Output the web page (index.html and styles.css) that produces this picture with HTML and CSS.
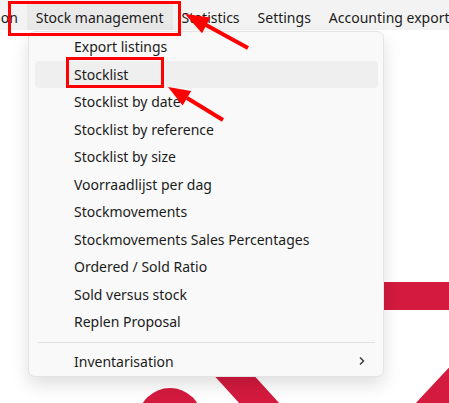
FILE: index.html
```html
<!DOCTYPE html>
<html lang="en">
<head>
  <meta charset="UTF-8">
  <title>Stock management menu</title>
  <link rel="stylesheet" href="styles.css">
</head>
<body>

  <svg class="backdrop" width="449" height="403" viewBox="0 0 449 403">
    <rect x="370" y="282" width="90" height="28" fill="#d41a3e"/>
    <polygon points="200,360 240,360 290,415 250,415" fill="#d41a3e"/>
    <circle cx="170" cy="420" r="32" fill="#d41a3e"/>
    <polygon points="470,345 470,420 400,420" fill="#d41a3e"/>
  </svg>

  <nav class="menubar">
    <span class="menubar-item first">tion</span>
    <span class="menubar-item active">Stock management</span>
    <span class="menubar-item">Statistics</span>
    <span class="menubar-item">Settings</span>
    <span class="menubar-item">Accounting export</span>
  </nav>

  <ul class="dropdown">
    <li class="dropdown-item">Export listings</li>
    <li class="dropdown-item hover">Stocklist</li>
    <li class="dropdown-item">Stocklist by date</li>
    <li class="dropdown-item">Stocklist by reference</li>
    <li class="dropdown-item">Stocklist by size</li>
    <li class="dropdown-item">Voorraadlijst per dag</li>
    <li class="dropdown-item">Stockmovements</li>
    <li class="dropdown-item">Stockmovements Sales Percentages</li>
    <li class="dropdown-item">Ordered / Sold Ratio</li>
    <li class="dropdown-item">Sold versus stock</li>
    <li class="dropdown-item">Replen Proposal</li>
    <li class="dropdown-sep"></li>
    <li class="dropdown-item has-sub">
      <span>Inventarisation</span>
      <svg class="chevron" width="8" height="10" viewBox="0 0 8 10">
        <path d="M2 1.5 L5.5 5 L2 8.5" fill="none" stroke="#333" stroke-width="1.4"/>
      </svg>
    </li>
  </ul>

  <!-- annotations -->
  <div class="mark mark-menu"></div>
  <div class="mark mark-item"></div>
  <svg class="arrows" width="449" height="403" viewBox="0 0 449 403">
    <line x1="248" y1="48" x2="206" y2="25" stroke="#f00" stroke-width="4"/>
    <polygon points="185,14 210.4,17.4 202,33.2" fill="#f00"/>
    <line x1="223" y1="120" x2="187" y2="98" stroke="#f00" stroke-width="4"/>
    <polygon points="168,87 191.2,90.9 182.6,105.5" fill="#f00"/>
  </svg>

</body>
</html>
```

FILE: styles.css
```css
body { margin: 0; width: 449px; height: 403px; overflow: hidden; position: relative; background: #fff; font-family: "Noto Sans", "Open Sans", sans-serif; font-size: 14px; color: #1b1b1b; }

.backdrop { position: absolute; left: 0; top: 0; }

.menubar { position: relative; display: flex; height: 30px; background: #f3f3f3; white-space: nowrap; }
.menubar-item { display: flex; align-items: center; padding: 0 9px; margin-top: 4px; }
.menubar-item.first { margin-left: -17px; }
.menubar-item.active { background: #e9e9e9; }

.dropdown { position: absolute; left: 28px; top: 31px; width: 343px; margin: 0; padding: 1px 5px 1px 6px; list-style: none; background: #f9f9f9; border: 1px solid #e3e3e3; border-radius: 7px; box-shadow: 0 8px 18px rgba(0, 0, 0, 0.13); }
.dropdown-item { height: 27.5px; line-height: 27.5px; padding-left: 39px; border-radius: 4px; }
.dropdown-item.hover { background: #efefef; }
.dropdown-item.has-sub { display: flex; justify-content: space-between; align-items: center; padding-right: 12px; }
.dropdown-sep { height: 1px; background: #e0e0e0; margin: 6px 3px 5px 3px; }

.mark { position: absolute; border: 3px solid #f00; }
.mark-menu { left: 8px; top: 1px; width: 167px; height: 29px; }
.mark-item { left: 66px; top: 57px; width: 92px; height: 25px; }

.arrows { position: absolute; left: 0; top: 0; }
```
